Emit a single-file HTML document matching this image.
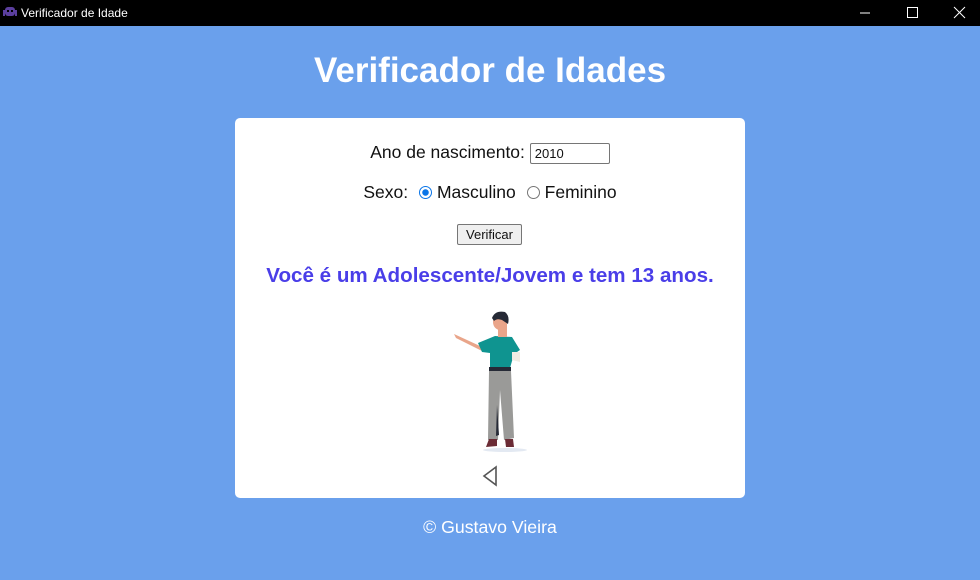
<!DOCTYPE html>
<html><head><meta charset="utf-8"><style>
*{margin:0;padding:0;box-sizing:border-box}
body{width:980px;height:580px;background:#6aa0ec;font-family:"Liberation Sans",sans-serif;position:relative;overflow:hidden}
.tb{height:26px;background:#000;color:#fff;font-size:12px;display:flex;align-items:center;position:relative}
.tb span{margin-left:21px}
h1{position:absolute;top:51px;width:100%;text-align:center;color:#fff;font-size:35px;font-weight:bold}
.card{position:absolute;left:235px;top:118px;width:510px;height:380px;background:#fff;border-radius:5px;text-align:center;font-size:17.5px;color:#111}
.r1{position:absolute;top:24px;width:100%}
.inp{display:inline-block;width:80px;height:21px;border:1px solid #767676;border-radius:2px;font-size:13px;text-align:left;padding-left:4px;line-height:19px;vertical-align:middle}
.r2{position:absolute;top:64px;width:100%;word-spacing:2px}
.rad{display:inline-block;width:13px;height:13px;border-radius:50%;border:1px solid #767676;vertical-align:-1px;margin:0 5px 0 4px}
.on{border:1.5px solid #0a75e8;background:radial-gradient(#0a75e8 3px,#fff 3.5px)}
.btn{position:absolute;top:106px;left:222px;width:65px;height:21px;border:1px solid #767676;background:#efefef;border-radius:2px;font-size:13px;line-height:19px}
.res{position:absolute;top:146px;width:100%;color:#4a3ee8;font-weight:bold;font-size:20.6px}
.foot{position:absolute;top:517px;width:100%;text-align:center;color:#fff;font-size:17.7px}
</style></head><body>
<div class="tb"><svg style="position:absolute;left:3px;top:5px" width="14" height="14" viewBox="0 0 14 14"><rect x="2" y="2" width="10" height="9" rx="3" fill="#5b3f9e"/><rect x="0" y="5" width="2" height="6" fill="#5b3f9e"/><rect x="12" y="5" width="2" height="6" fill="#5b3f9e"/><rect x="4" y="5" width="2" height="2" fill="#000"/><rect x="8" y="5" width="2" height="2" fill="#000"/></svg><span>Verificador de Idade</span>
<svg style="position:absolute;left:860px;top:6px" width="110" height="14"><line x1="0" y1="7" x2="10" y2="7" stroke="#fff"/><rect x="47.5" y="1.5" width="10" height="10" fill="none" stroke="#fff"/><path d="M94 1l11 11M105 1l-11 11" stroke="#fff"/></svg></div>
<h1>Verificador de Idades</h1>
<div class="card">
<div class="r1">Ano de nascimento: <span class="inp">2010</span></div>
<div class="r2">Sexo: <span class="rad on"></span>Masculino <span class="rad"></span>Feminino</div>
<div class="btn">Verificar</div>
<div class="res">Você é um Adolescente/Jovem e tem 13 anos.</div>
<svg style="position:absolute;left:215px;top:192px" width="80" height="145" viewBox="0 0 80 145">
<ellipse cx="55" cy="140" rx="22" ry="2" fill="#e3e9f2"/>
<path d="M4 24 L30 36 L32 41 L6 28Z" fill="#e9a58a"/>
<path d="M28 33 L45 26 L62 27 L70 40 L64 44 L60 58 L40 58 L40 43 L32 42Z" fill="#0f9490"/>
<path d="M62 42 L70 42 L70 52 L62 50Z" fill="#f0ece2"/>
<rect x="48" y="13" width="9" height="14" fill="#e9a58a"/>
<ellipse cx="50" cy="12" rx="7" ry="8" fill="#eaa58a"/>
<path d="M42 8 Q45 0 55 2 Q60 6 58 14 L52 10 Q47 8 44 11Z" fill="#262a36"/>
<rect x="39" y="57" width="22" height="4" fill="#262a36"/>
<path d="M39 61 L61 61 L64 128 L54 130 L50 80 L48 130 L38 130Z" fill="#9a9a98"/>
<path d="M47 95 L49 125 L46 126Z" fill="#262a36"/>
<path d="M39 129 L47 129 L47 136 L36 137Z M55 129 L63 129 L64 137 L56 137Z" fill="#6b2b35"/>
</svg>
<svg style="position:absolute;left:246px;top:347px" width="18" height="22"><path d="M15 2 L3 11 L15 20Z" fill="none" stroke="#555" stroke-width="1.6"/></svg>
</div>
<div class="foot">© Gustavo Vieira</div>
</body></html>
